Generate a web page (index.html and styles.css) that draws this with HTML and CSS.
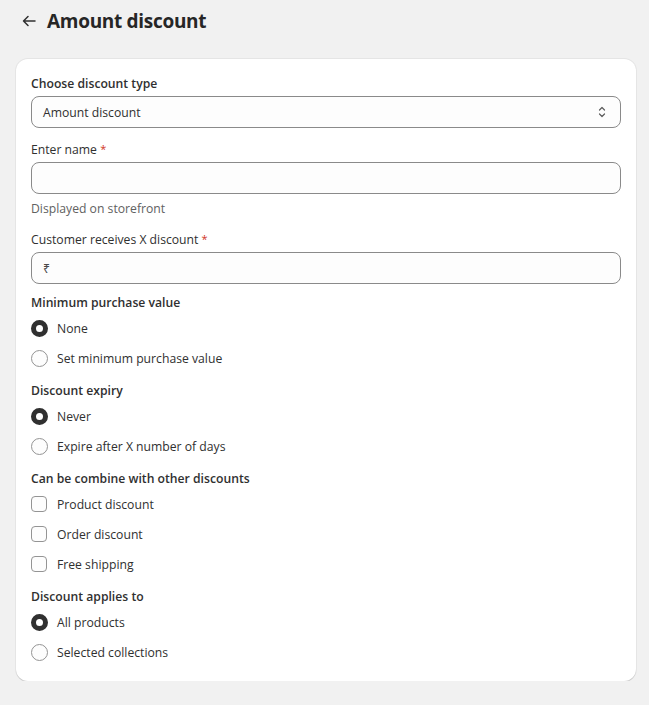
FILE: index.html
```html
<!DOCTYPE html>
<html lang="en">
<head>
<meta charset="utf-8">
<title>Amount discount</title>
<link rel="stylesheet" href="styles.css">
</head>
<body>
<div class="page">
  <header class="page-header">
    <button class="back" aria-label="Back">
      <svg width="20" height="20" viewBox="0 0 20 20"><path d="M16 10H4.5M9 5.5 4.5 10 9 14.5" fill="none" stroke="#303030" stroke-width="1.5" stroke-linecap="round" stroke-linejoin="round"/></svg>
    </button>
    <h1 class="title">Amount discount</h1>
  </header>

  <section class="card">
    <div class="field">
      <label class="label">Choose discount type</label>
      <div class="select">
        <span>Amount discount</span>
        <svg class="chev" width="20" height="20" viewBox="0 0 20 20"><path d="M7.5 8 10 5.5 12.5 8M7.5 12 10 14.5 12.5 12" fill="none" stroke="#5c5c5c" stroke-width="1.2" stroke-linecap="round" stroke-linejoin="round"/></svg>
      </div>
    </div>

    <div class="field">
      <label class="label">Enter name <span class="req">*</span></label>
      <div class="input"></div>
      <p class="help">Displayed on storefront</p>
    </div>

    <div class="field">
      <label class="label">Customer receives X discount <span class="req">*</span></label>
      <div class="input"><span class="prefix">₹</span></div>
    </div>

    <div class="group">
      <h2 class="heading">Minimum purchase value</h2>
      <div class="opt"><span class="radio on"></span><span class="txt">None</span></div>
      <div class="opt"><span class="radio"></span><span class="txt">Set minimum purchase value</span></div>
    </div>

    <div class="group">
      <h2 class="heading">Discount expiry</h2>
      <div class="opt"><span class="radio on"></span><span class="txt">Never</span></div>
      <div class="opt"><span class="radio"></span><span class="txt">Expire after X number of days</span></div>
    </div>

    <div class="group">
      <h2 class="heading">Can be combine with other discounts</h2>
      <div class="opt"><span class="check"></span><span class="txt">Product discount</span></div>
      <div class="opt"><span class="check"></span><span class="txt">Order discount</span></div>
      <div class="opt"><span class="check"></span><span class="txt">Free shipping</span></div>
    </div>

    <div class="group">
      <h2 class="heading">Discount applies to</h2>
      <div class="opt"><span class="radio on"></span><span class="txt">All products</span></div>
      <div class="opt"><span class="radio"></span><span class="txt">Selected collections</span></div>
    </div>
  </section>
</div>
</body>
</html>
```

FILE: styles.css
```css
* { box-sizing: border-box; }
html, body { margin: 0; padding: 0; }
body {
  background: #f1f1f1;
  font-family: "Open Sans", "Noto Sans", sans-serif;
  font-size: 12.2px;
  line-height: 20px;
  color: #303030;
}
.page {
  padding: 8px 13px 0 16px;
}
.page-header {
  display: flex;
  align-items: center;
  height: 26px;
  margin-bottom: 25px;
}
.back {
  border: 0;
  background: none;
  padding: 0;
  margin: 0 8px 0 3px;
  width: 20px;
  height: 20px;
  display: flex;
}
.title {
  margin: 0;
  font-size: 19px;
  font-weight: 700;
  line-height: 26px;
  color: #262626;
  letter-spacing: -0.3px;
}
.card {
  background: #fff;
  border-radius: 12px;
  box-shadow: 0 1px 0 0 rgba(26,26,26,0.13), 0 0 0 1px rgba(26,26,26,0.05);
  padding: 14px 15px 19px 15px;
}
.label {
  display: block;
  padding-top: 1px;
  margin-bottom: 2px;
}
.field:first-child .label { font-weight: 600; }
.field + .field { margin-top: 10px; }
.req { color: #d0341c; font-size: 11px; vertical-align: 1px; }
.select, .input {
  height: 32px;
  border: 1px solid #8a8a8a;
  border-radius: 8px;
  background: #fdfdfd;
  display: flex;
  align-items: center;
  padding: 1px 11px 0;
}
.select { justify-content: space-between; padding-right: 8px; }
.chev { margin-top: -1px; }
.prefix { color: #4a4a4a; }
.help {
  margin: 5px 0 0;
  color: #616161;
}
.field:nth-child(3) { margin-top: 9px; }
.group { margin-top: 8px; }
.group + .group { margin-top: 12px; }
.heading {
  margin: 0 0 6px;
  padding-top: 1px;
  height: 20px;
  font-size: 12.2px;
  font-weight: 600;
  line-height: 20px;
}
.opt {
  display: flex;
  align-items: center;
  gap: 9px;
  height: 20px;
}
.txt { padding-top: 2px; }
.opt + .opt { margin-top: 10px; }
.radio {
  width: 17px;
  height: 17px;
  border-radius: 50%;
  border: 1px solid #949494;
  background: #fdfdfd;
  flex: none;
}
.radio.on {
  border: 5px solid #303030;
  background: #fff;
}
.check {
  width: 16px;
  height: 16px;
  border-radius: 4px;
  border: 1px solid #949494;
  background: #fdfdfd;
  flex: none;
  margin-right: 1px;
}
```
